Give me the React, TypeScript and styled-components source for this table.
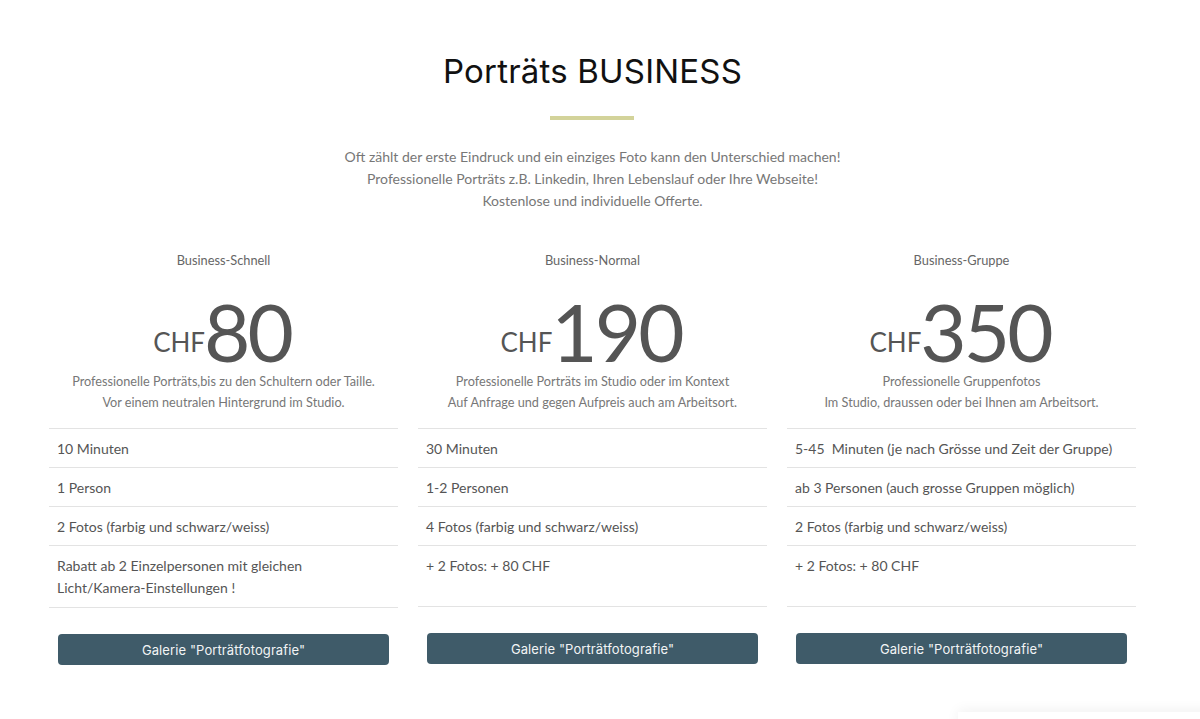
import React from "react";
import styled, { createGlobalStyle } from "styled-components";

const Global = createGlobalStyle`
  html, body { margin: 0; padding: 0; background: #fff; }
  body { font-family: Lato, "Liberation Sans", sans-serif; overflow: hidden; }
  * { box-sizing: border-box; }
`;

const Page = styled.div`
  width: 1185px;
  height: 719px;
  padding-top: 50px;
`;

const Container = styled.div`
  width: 1107px;
  margin: 0 auto;
`;

const Header = styled.header`
  display: flex;
  flex-direction: column;
  align-items: center;
`;

const Title = styled.h1`
  margin: 0;
  font-family: Inter, "Noto Sans", sans-serif;
  font-weight: 400;
  font-size: 33px;
  line-height: 42px;
  color: #111;
  letter-spacing: 0.2px;
`;

const Divider = styled.div`
  width: 84px;
  height: 4px;
  background: #d3d39a;
  margin-top: 24px;
  margin-right: 2px;
`;

const Intro = styled.p`
  margin: 26px 0 0;
  font-size: 14px;
  line-height: 22px;
  color: #777;
  text-align: center;
`;

const Columns = styled.div`
  display: grid;
  grid-template-columns: repeat(3, 1fr);
  margin-top: 38px;
`;

const Column = styled.section`
  padding: 0 10px;
  display: flex;
  flex-direction: column;
  align-items: stretch;
`;

const PlanName = styled.div`
  text-align: center;
  font-size: 12.8px;
  line-height: 20px;
  color: #666;
`;

const Price = styled.div`
  display: flex;
  justify-content: center;
  align-items: flex-end;
  margin-top: 24px;
  height: 75px;
  color: #555;
  padding-right: 3px;
`;

const Currency = styled.span`
  font-size: 26px;
  line-height: 1;
  margin-bottom: 14px;
`;

const Amount = styled.span`
  font-size: 80px;
  line-height: 75px;
  letter-spacing: -3px;
  margin-left: -1px;
`;

const Description = styled.p`
  margin: 2px 0 0;
  text-align: center;
  font-size: 12.7px;
  line-height: 21px;
  color: #777;
`;

const Features = styled.ul`
  list-style: none;
  margin: 15px 0 0;
  padding: 0;
  border-top: 1px solid #e3e3e3;
`;

const Feature = styled.li<{ $tall?: boolean }>`
  padding: 9px 8px 8px;
  font-size: 14px;
  line-height: ${(p) => (p.$tall ? "22px" : "21px")};
  color: #555;
  border-bottom: 1px solid #e3e3e3;
  min-height: ${(p) => (p.$tall ? "61px" : "39px")};
`;

const Button = styled.a`
  display: flex;
  align-items: center;
  justify-content: center;
  margin: 26px 9px 0;
  height: 31px;
  background: #3f5b69;
  border-radius: 4px;
  color: #f2f4f5;
  font-family: Inter, "Noto Sans", sans-serif;
  font-size: 13px;
  text-decoration: none;
  letter-spacing: 0.1px;
`;

const CornerShadow = styled.div`
  position: fixed;
  left: 958px;
  top: 712px;
  width: 260px;
  height: 60px;
  background: #fff;
  box-shadow: 0 -2px 12px rgba(0, 0, 0, 0.06);
`;

type Plan = {
  name: string;
  amount: string;
  desc: string[];
  features: string[];
};

const plans: Plan[] = [
  {
    name: "Business-Schnell",
    amount: "80",
    desc: [
      "Professionelle Porträts,bis zu den Schultern oder Taille.",
      "Vor einem neutralen Hintergrund im Studio.",
    ],
    features: [
      "10 Minuten",
      "1 Person",
      "2 Fotos (farbig und schwarz/weiss)",
      "Rabatt ab 2 Einzelpersonen mit gleichen Licht/Kamera-Einstellungen !",
    ],
  },
  {
    name: "Business-Normal",
    amount: "190",
    desc: [
      "Professionelle Porträts im Studio oder im Kontext",
      "Auf Anfrage und gegen Aufpreis auch am Arbeitsort.",
    ],
    features: [
      "30 Minuten",
      "1-2 Personen",
      "4 Fotos (farbig und schwarz/weiss)",
      "+ 2 Fotos: + 80 CHF",
    ],
  },
  {
    name: "Business-Gruppe",
    amount: "350",
    desc: [
      "Professionelle Gruppenfotos",
      "Im Studio, draussen oder bei Ihnen am Arbeitsort.",
    ],
    features: [
      "5-45\u00a0 Minuten (je nach Grösse und Zeit der Gruppe)",
      "ab 3 Personen (auch grosse Gruppen möglich)",
      "2 Fotos (farbig und schwarz/weiss)",
      "+ 2 Fotos: + 80 CHF",
    ],
  },
];

export default function App() {
  return (
    <>
      <Global />
      <Page>
        <Container>
          <Header>
            <Title>Porträts BUSINESS</Title>
            <Divider />
            <Intro>
              Oft zählt der erste Eindruck und ein einziges Foto kann den Unterschied machen!
              <br />
              Professionelle Porträts z.B. Linkedin, Ihren Lebenslauf oder Ihre Webseite!
              <br />
              Kostenlose und individuelle Offerte.
            </Intro>
          </Header>
          <Columns>
            {plans.map((p) => (
              <Column key={p.name}>
                <PlanName>{p.name}</PlanName>
                <Price>
                  <Currency>CHF</Currency>
                  <Amount>{p.amount}</Amount>
                </Price>
                <Description>
                  {p.desc[0]}
                  <br />
                  {p.desc[1]}
                </Description>
                <Features>
                  {p.features.map((f, i) => (
                    <Feature key={f} $tall={i === 3}>
                      {f}
                    </Feature>
                  ))}
                </Features>
                <Button href="#">Galerie "Porträtfotografie"</Button>
              </Column>
            ))}
          </Columns>
        </Container>
      </Page>
      <CornerShadow />
    </>
  );
}
